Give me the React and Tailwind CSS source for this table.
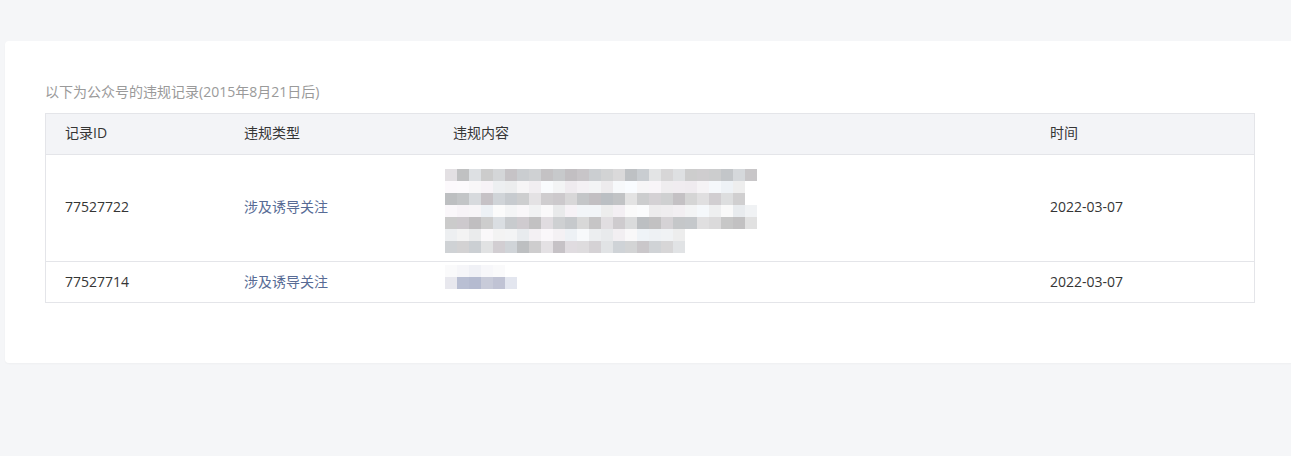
import React from 'react';

// pseudo-random mosaic for the blurred content column
const rand = (seed) => {
  let s = seed;
  return () => {
    s = (s * 9301 + 49297) % 233280;
    return s / 233280;
  };
};

const makeMosaic = (rows, seed) => {
  const r = rand(seed);
  return rows.map(([count, dark]) =>
    Array.from({ length: count }, () => {
      const v = dark ? Math.round(190 + r() * 38) : Math.round(234 + r() * 18);
      const tint = Math.round((r() - 0.5) * 8);
      return `rgb(${v + tint},${v},${v + Math.abs(tint)})`;
    })
  );
};

const MOSAIC_1 = makeMosaic(
  [
    [26, true],
    [25, false],
    [25, true],
    [26, false],
    [26, true],
    [20, false],
    [20, true],
  ],
  17
);

const MOSAIC_2 = [
  ['#fafafb', '#f6f6f9', '#f0f1f6', '#f7f7fa', '#fafafb', '#ffffff'],
  ['#e8e8ee', '#b9bfd3', '#b5bbd0', '#c8cbd9', '#c0c3d4', '#e3e6ef'],
];

const Mosaic = ({ rows }) => (
  <div className="flex flex-col">
    {rows.map((row, i) => (
      <div key={i} className="flex">
        {row.map((c, j) => (
          <div key={j} className="w-[12px] h-[12px]" style={{ backgroundColor: c }} />
        ))}
      </div>
    ))}
  </div>
);

const COLS = 'grid grid-cols-[179px_209px_597px_1fr]';

export default function App() {
  return (
    <div
      className="min-h-screen bg-[#f5f6f8] pt-[41px] overflow-hidden"
      style={{ fontFamily: '"Open Sans", "Noto Sans CJK SC", sans-serif' }}
    >
      <div className="ml-[5px] bg-white rounded-l-[4px] pl-[40px] pr-[36px] pt-[40px] pb-[60px] shadow-[0_1px_2px_rgba(0,0,0,0.03)]">
        <p className="text-[14px] leading-[22px] text-[#9a9a9a] mb-[10px]">
          以下为公众号的违规记录(2015年8月21日后)
        </p>

        <div className="border border-[#e4e5e9] text-[14px] text-[#353535]">
          <div className={`${COLS} h-[41px] pb-[3px] items-center bg-[#f3f4f7] border-b border-[#e4e5e9]`}>
            <div className="pl-[19px]">记录ID</div>
            <div className="pl-[19px]">违规类型</div>
            <div className="pl-[19px]">违规内容</div>
            <div className="pl-[19px]">时间</div>
          </div>

          <div className={`${COLS} h-[107px] pb-[3px] items-center border-b border-[#e4e5e9]`}>
            <div className="pl-[19px]">77527722</div>
            <div className="pl-[19px] text-[#576b95]">涉及诱导关注</div>
            <div className="pl-[11px] self-start pt-[14px]">
              <Mosaic rows={MOSAIC_1} />
            </div>
            <div className="pl-[19px]">2022-03-07</div>
          </div>

          <div className={`${COLS} h-[40px] pb-[2px] items-center`}>
            <div className="pl-[19px]">77527714</div>
            <div className="pl-[19px] text-[#576b95]">涉及诱导关注</div>
            <div className="pl-[11px] self-start pt-[3px]">
              <Mosaic rows={MOSAIC_2} />
            </div>
            <div className="pl-[19px]">2022-03-07</div>
          </div>
        </div>
      </div>
    </div>
  );
}
